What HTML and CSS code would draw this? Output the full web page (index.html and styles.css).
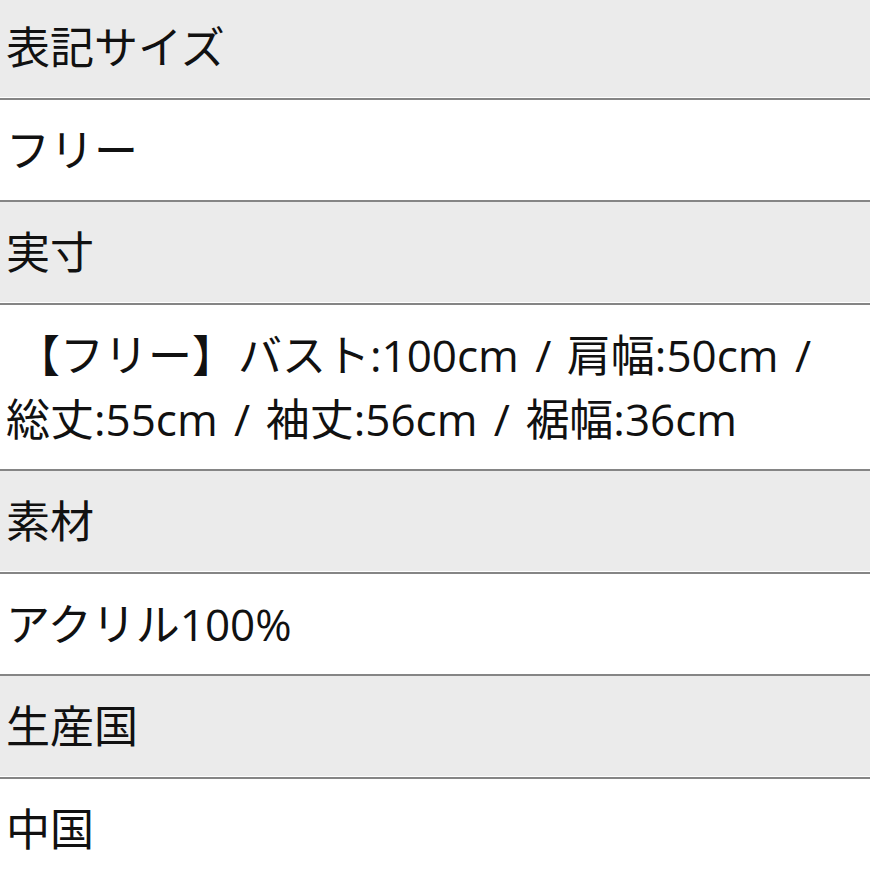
FILE: index.html
```html
<!DOCTYPE html>
<html lang="ja">
<head>
<meta charset="utf-8">
<link rel="stylesheet" href="styles.css">
</head>
<body>
<div class="spec">
  <div class="row head">表記サイズ</div>
  <div class="row">フリー</div>
  <div class="row head">実寸</div>
  <div class="row sizes"><span class="tag">【フリー】</span><span class="item">バスト:100cm /</span> <span class="item">肩幅:50cm /</span> <span class="item">総丈:55cm /</span> <span class="item">袖丈:56cm /</span> <span class="item">裾幅:36cm</span></div>
  <div class="row head">素材</div>
  <div class="row">アクリル100%</div>
  <div class="row head">生産国</div>
  <div class="row">中国</div>
</div>
</body>
</html>
```

FILE: styles.css
```css
html, body {
  margin: 0;
  padding: 0;
  background: #ffffff;
  overflow: hidden;
}
.spec {
  margin-top: -3px;
  font-family: "Open Sans", "Noto Sans CJK JP", sans-serif;
  font-size: 44px;
  line-height: 64px;
  color: #111111;
  text-spacing-trim: space-all;
}
.row {
  padding: 18.25px 6px;
  border-bottom: 2px solid #858585;
  background: #ffffff;
}
.row.head {
  background: #ebebeb;
  box-shadow: inset 0 -1px 0 #ffffff;
}
.sizes {
  word-spacing: 4px;
}
.tag {
  margin-left: 10px;
  margin-right: 2px;
}
.item {
  white-space: nowrap;
  word-spacing: 5px;
}
```
